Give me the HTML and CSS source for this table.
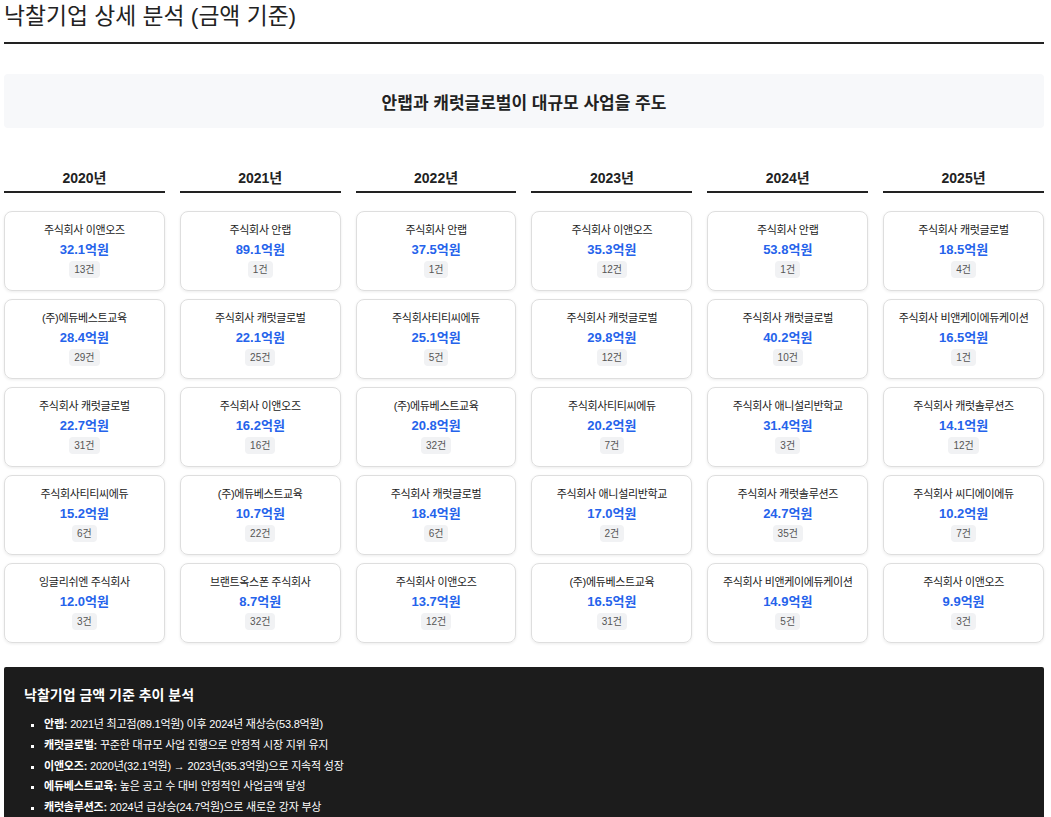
FILE: index.html
```html
<!DOCTYPE html>
<html lang="ko">
<head>
<meta charset="utf-8">
<link rel="stylesheet" href="styles.css">
</head>
<body>
<h1 class="title">낙찰기업 상세 분석 (금액 기준)</h1>
<div class="banner">안랩과 캐럿글로벌이 대규모 사업을 주도</div>
<div class="grid">
  <div class="col">
    <div class="year">2020년</div>
    <div class="card"><div class="name">주식회사 이앤오즈</div><div class="amt">32.1억원</div><span class="cnt">13건</span></div>
    <div class="card"><div class="name">(주)에듀베스트교육</div><div class="amt">28.4억원</div><span class="cnt">29건</span></div>
    <div class="card"><div class="name">주식회사 캐럿글로벌</div><div class="amt">22.7억원</div><span class="cnt">31건</span></div>
    <div class="card"><div class="name">주식회사티티씨에듀</div><div class="amt">15.2억원</div><span class="cnt">6건</span></div>
    <div class="card"><div class="name">잉글리쉬엔 주식회사</div><div class="amt">12.0억원</div><span class="cnt">3건</span></div>
  </div>
  <div class="col">
    <div class="year">2021년</div>
    <div class="card"><div class="name">주식회사 안랩</div><div class="amt">89.1억원</div><span class="cnt">1건</span></div>
    <div class="card"><div class="name">주식회사 캐럿글로벌</div><div class="amt">22.1억원</div><span class="cnt">25건</span></div>
    <div class="card"><div class="name">주식회사 이앤오즈</div><div class="amt">16.2억원</div><span class="cnt">16건</span></div>
    <div class="card"><div class="name">(주)에듀베스트교육</div><div class="amt">10.7억원</div><span class="cnt">22건</span></div>
    <div class="card"><div class="name">브랜트옥스폰 주식회사</div><div class="amt">8.7억원</div><span class="cnt">32건</span></div>
  </div>
  <div class="col">
    <div class="year">2022년</div>
    <div class="card"><div class="name">주식회사 안랩</div><div class="amt">37.5억원</div><span class="cnt">1건</span></div>
    <div class="card"><div class="name">주식회사티티씨에듀</div><div class="amt">25.1억원</div><span class="cnt">5건</span></div>
    <div class="card"><div class="name">(주)에듀베스트교육</div><div class="amt">20.8억원</div><span class="cnt">32건</span></div>
    <div class="card"><div class="name">주식회사 캐럿글로벌</div><div class="amt">18.4억원</div><span class="cnt">6건</span></div>
    <div class="card"><div class="name">주식회사 이앤오즈</div><div class="amt">13.7억원</div><span class="cnt">12건</span></div>
  </div>
  <div class="col">
    <div class="year">2023년</div>
    <div class="card"><div class="name">주식회사 이앤오즈</div><div class="amt">35.3억원</div><span class="cnt">12건</span></div>
    <div class="card"><div class="name">주식회사 캐럿글로벌</div><div class="amt">29.8억원</div><span class="cnt">12건</span></div>
    <div class="card"><div class="name">주식회사티티씨에듀</div><div class="amt">20.2억원</div><span class="cnt">7건</span></div>
    <div class="card"><div class="name">주식회사 애니설리반학교</div><div class="amt">17.0억원</div><span class="cnt">2건</span></div>
    <div class="card"><div class="name">(주)에듀베스트교육</div><div class="amt">16.5억원</div><span class="cnt">31건</span></div>
  </div>
  <div class="col">
    <div class="year">2024년</div>
    <div class="card"><div class="name">주식회사 안랩</div><div class="amt">53.8억원</div><span class="cnt">1건</span></div>
    <div class="card"><div class="name">주식회사 캐럿글로벌</div><div class="amt">40.2억원</div><span class="cnt">10건</span></div>
    <div class="card"><div class="name">주식회사 애니설리반학교</div><div class="amt">31.4억원</div><span class="cnt">3건</span></div>
    <div class="card"><div class="name">주식회사 캐럿솔루션즈</div><div class="amt">24.7억원</div><span class="cnt">35건</span></div>
    <div class="card"><div class="name">주식회사 비앤케이에듀케이션</div><div class="amt">14.9억원</div><span class="cnt">5건</span></div>
  </div>
  <div class="col">
    <div class="year">2025년</div>
    <div class="card"><div class="name">주식회사 캐럿글로벌</div><div class="amt">18.5억원</div><span class="cnt">4건</span></div>
    <div class="card"><div class="name">주식회사 비앤케이에듀케이션</div><div class="amt">16.5억원</div><span class="cnt">1건</span></div>
    <div class="card"><div class="name">주식회사 캐럿솔루션즈</div><div class="amt">14.1억원</div><span class="cnt">12건</span></div>
    <div class="card"><div class="name">주식회사 씨디에이에듀</div><div class="amt">10.2억원</div><span class="cnt">7건</span></div>
    <div class="card"><div class="name">주식회사 이앤오즈</div><div class="amt">9.9억원</div><span class="cnt">3건</span></div>
  </div>
</div>
<div class="summary">
  <h2 class="sum-title">낙찰기업 금액 기준 추이 분석</h2>
  <ul class="sum-list">
    <li><b>안랩:</b> 2021년 최고점(89.1억원) 이후 2024년 재상승(53.8억원)</li>
    <li><b>캐럿글로벌:</b> 꾸준한 대규모 사업 진행으로 안정적 시장 지위 유지</li>
    <li><b>이앤오즈:</b> 2020년(32.1억원) → 2023년(35.3억원)으로 지속적 성장</li>
    <li><b>에듀베스트교육:</b> 높은 공고 수 대비 안정적인 사업금액 달성</li>
    <li><b>캐럿솔루션즈:</b> 2024년 급상승(24.7억원)으로 새로운 강자 부상</li>
  </ul>
</div>
</body>
</html>
```
FILE: styles.css
```css
* { box-sizing: border-box; }
body {
  margin: 0;
  padding: 0 7px 0 4px;
  font-family: "Liberation Sans", "Noto Sans CJK KR", sans-serif;
  color: #222;
  background: #fff;
}
.title {
  margin: 0;
  padding-top: 1px;
  font-size: 22.8px;
  font-weight: normal;
  line-height: 30px;
  height: 44px;
  border-bottom: 2px solid #222;
  color: #222;
}
.banner {
  margin-top: 30px;
  height: 54px;
  background: #f7f8fa;
  border-radius: 4px;
  display: flex;
  align-items: center;
  justify-content: center;
  font-size: 17px;
  font-weight: bold;
  color: #222;
}
.grid {
  margin-top: 35px;
  display: grid;
  grid-template-columns: repeat(6, 1fr);
  column-gap: 15px;
}
.col {
  display: flex;
  flex-direction: column;
  gap: 8px;
}
.year {
  text-align: center;
  font-size: 14px;
  font-weight: bold;
  height: 30px;
  line-height: 30px;
  border-bottom: 2px solid #222;
  margin-bottom: 10px;
}
.card {
  height: 80px;
  border: 1px solid #dedede;
  border-radius: 8px;
  box-shadow: 0 1px 3px rgba(0,0,0,0.08);
  display: flex;
  flex-direction: column;
  align-items: center;
  padding-top: 10px;
}
.name {
  font-size: 11px;
  line-height: 16px;
  letter-spacing: -0.35px;
  color: #222;
}
.amt {
  margin-top: 4px;
  font-size: 13px;
  font-weight: bold;
  color: #2563eb;
  line-height: 16px;
}
.cnt {
  margin-top: 3px;
  font-size: 10px;
  line-height: 17px;
  padding: 0 5px;
  background: #f1f2f4;
  color: #555;
  border-radius: 4px;
}
.summary {
  margin-top: 24px;
  background: #1c1c1c;
  color: #fff;
  padding: 19px 20px 4px 20px;
  border-radius: 2px;
}
.sum-title {
  margin: 0 0 13px 0;
  font-size: 14px;
  font-weight: bold;
  line-height: 18px;
}
.sum-list {
  margin: 0;
  padding-left: 20px;
  list-style: square;
}
.sum-list li {
  font-size: 11px;
  line-height: 14px;
  margin-bottom: 6.75px;
  letter-spacing: -0.2px;
}
.sum-list b { font-weight: bold; }
```
